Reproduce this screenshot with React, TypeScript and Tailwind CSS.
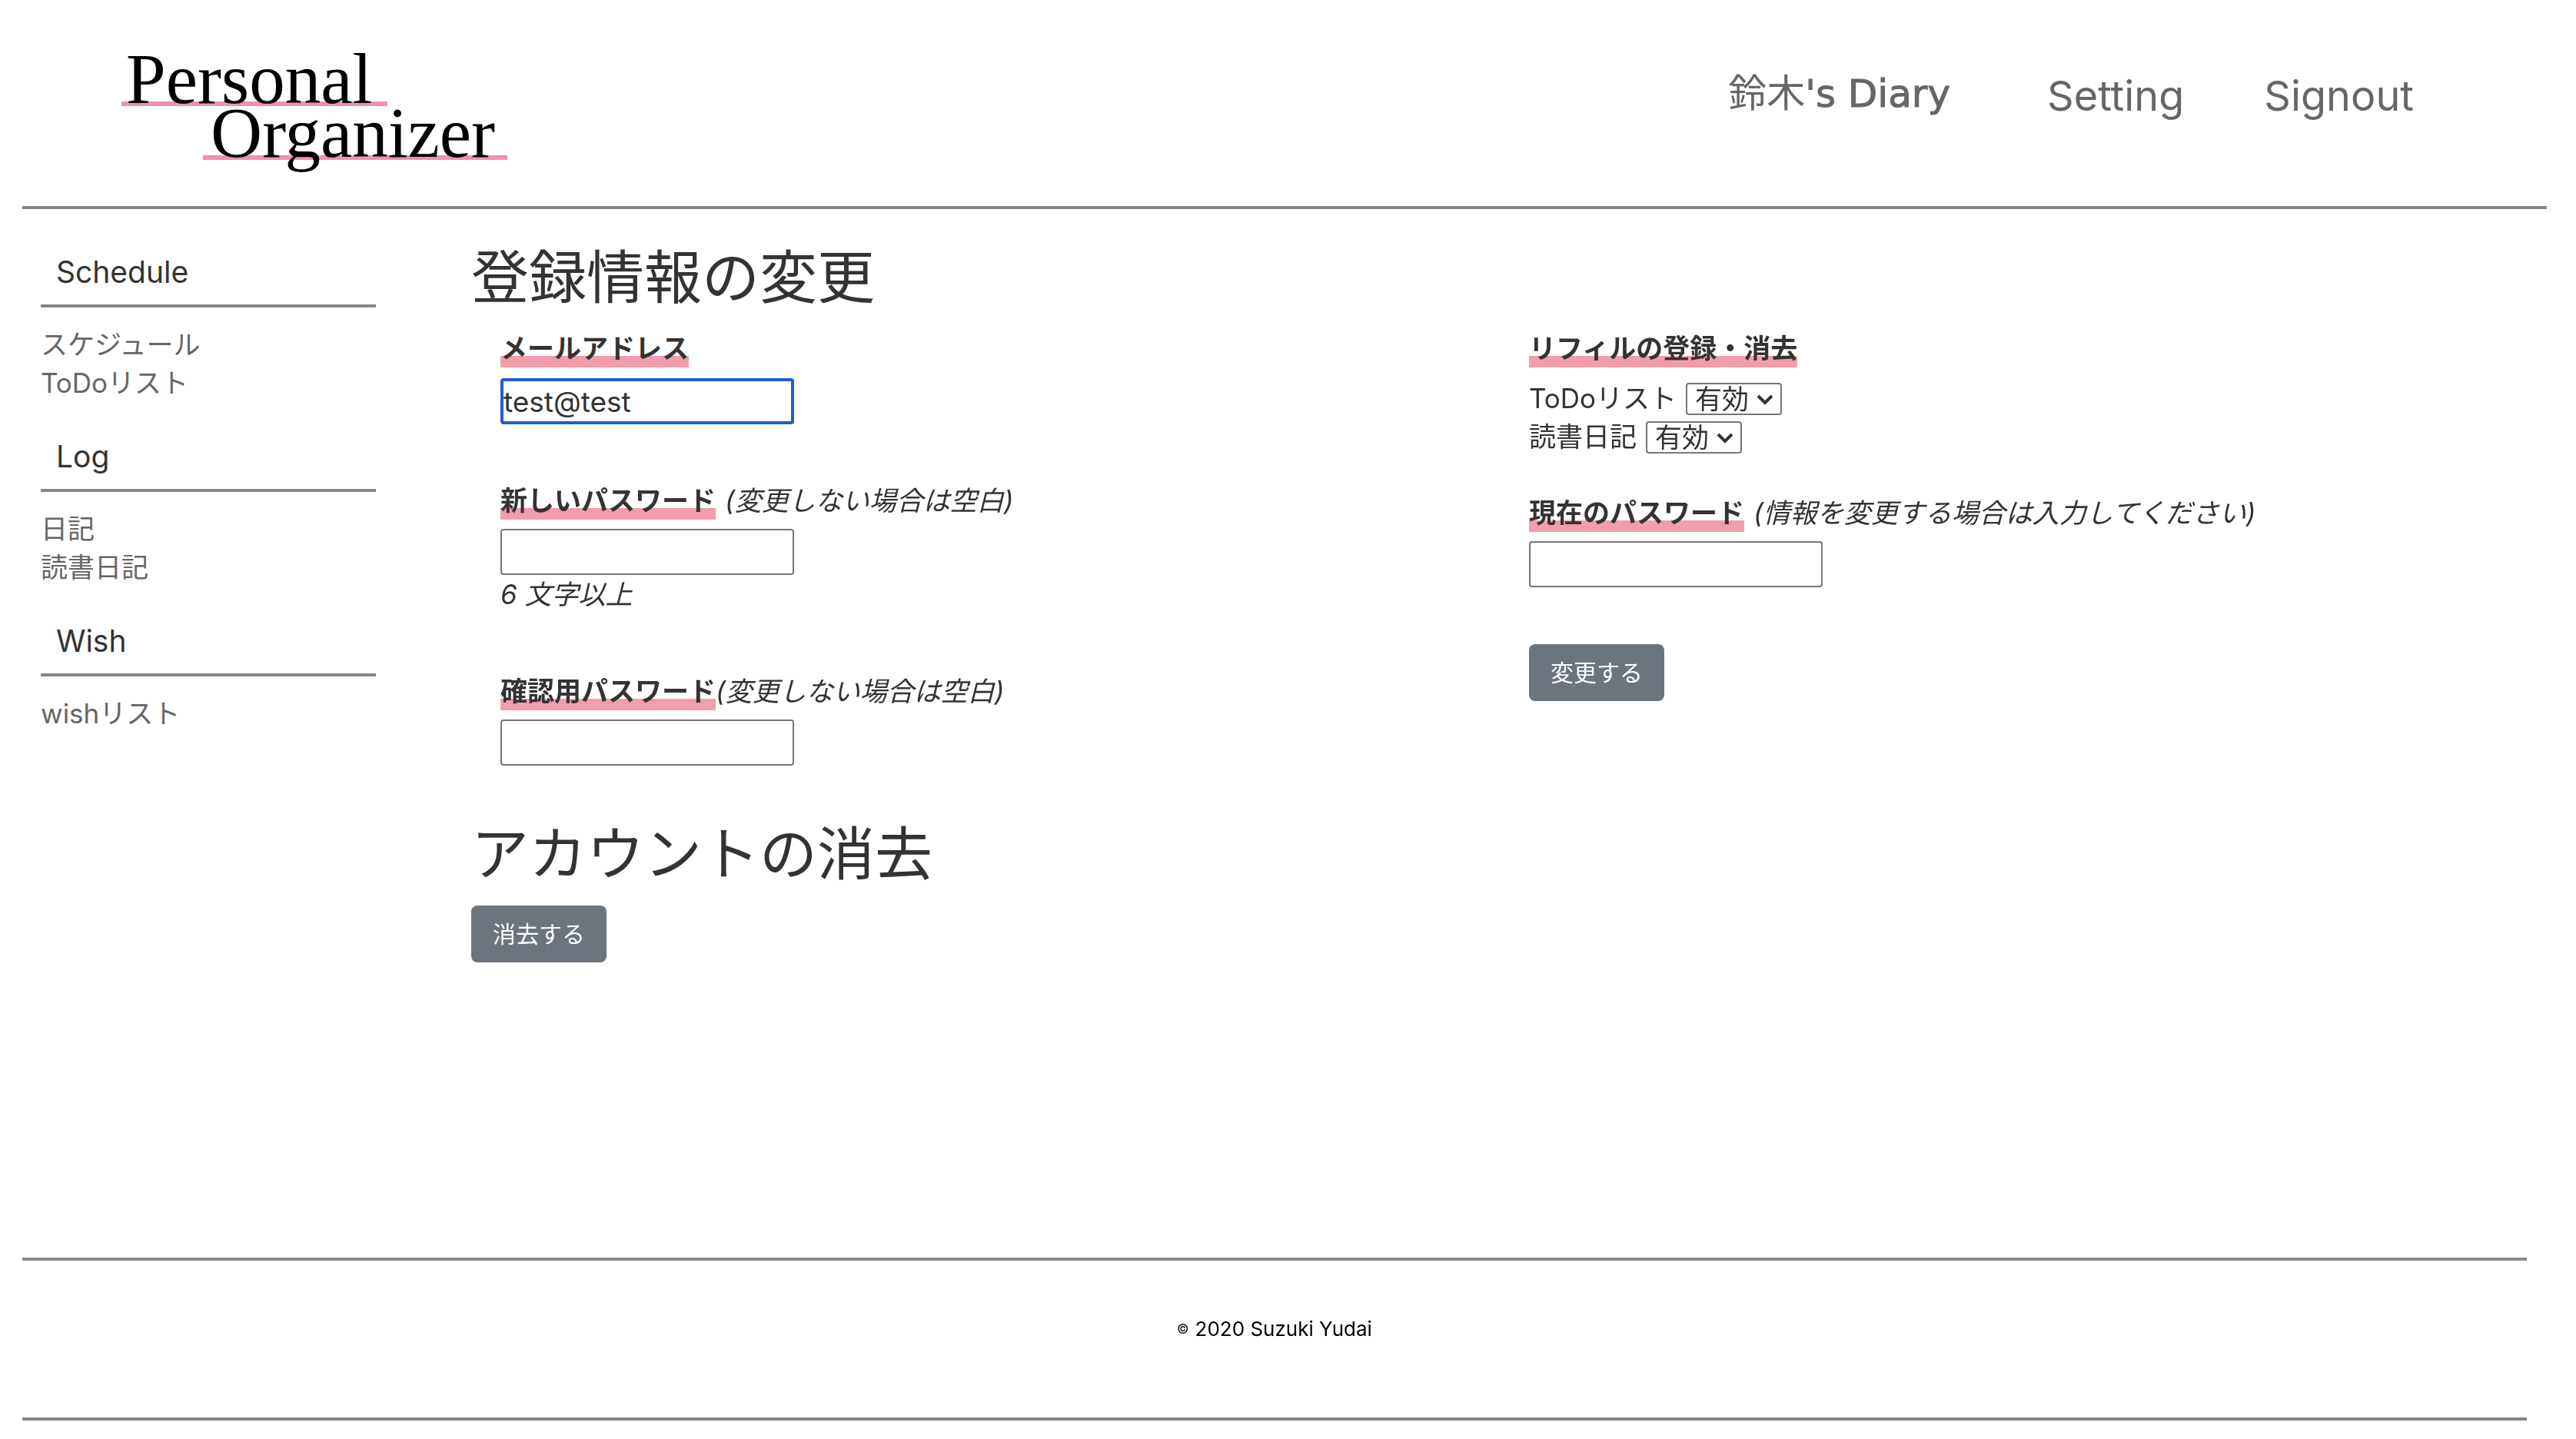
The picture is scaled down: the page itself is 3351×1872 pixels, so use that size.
import React, { useState } from "react";

type LinkItem = { label: string; href: string };

const sections: { title: string; links: LinkItem[] }[] = [
  {
    title: "Schedule",
    links: [
      { label: "スケジュール", href: "#schedule" },
      { label: "ToDoリスト", href: "#todo" },
    ],
  },
  {
    title: "Log",
    links: [
      { label: "日記", href: "#diary" },
      { label: "読書日記", href: "#reading" },
    ],
  },
  { title: "Wish", links: [{ label: "wishリスト", href: "#wish" }] },
];

const fieldClass =
  "block h-[60px] w-[382px] rounded-[4px] border-2 border-[#767676] bg-white px-1 text-[37px] leading-[50px] outline-none focus:border-4 focus:border-[#1f5fc6] focus:px-0";

function Logo() {
  return (
    <a
      href="#top"
      aria-label="Personal Organizer"
      className="flex flex-col items-start font-['Liberation_Serif',serif] text-[93px] leading-[70px] text-black"
    >
      <span className="h-[70px] bg-[linear-gradient(#f18fb7,#f18fb7)] bg-[length:100%_6px] bg-[position:0_64px] bg-no-repeat pr-5 pl-1.5">
        Personal
      </span>
      <span className="ml-[106px] h-[70px] bg-[linear-gradient(#f18fb7,#f18fb7)] bg-[length:100%_6px] bg-[position:0_64px] bg-no-repeat pr-4 pl-2.5">
        Organizer
      </span>
    </a>
  );
}

function Marked({ children }: { children: React.ReactNode }) {
  return (
    <span className="inline-block h-[50px] bg-[linear-gradient(transparent_70%,#f19dab_70%)] align-top font-bold">
      {children}
    </span>
  );
}

function RefillSelect({ id, label }: { id: string; label: string }) {
  return (
    <div className="flex h-[50px] items-start gap-3">
      <label htmlFor={id} className="leading-[40px]">
        {label}
      </label>
      <div className="relative">
        <select
          id={id}
          defaultValue="on"
          className="block h-[42px] w-[125px] appearance-none rounded-[4px] border-2 border-[#767676] bg-white pl-2.5 leading-[38px]"
        >
          <option value="on">有効</option>
          <option value="off">無効</option>
        </select>
        <svg
          viewBox="0 0 22 14"
          className="pointer-events-none absolute top-[15px] right-[11px] h-[14px] w-[22px]"
          fill="none"
          stroke="#333"
          strokeWidth="4"
        >
          <path d="M2 2 L11 11 L20 2" />
        </svg>
      </div>
    </div>
  );
}

function SubmitButton({ children }: { children: React.ReactNode }) {
  return (
    <button
      type="button"
      className="block h-[74px] cursor-pointer rounded-lg bg-[#6c757d] px-7 text-[30px] leading-[44px] text-white"
    >
      {children}
    </button>
  );
}

export default function App() {
  const [email, setEmail] = useState("test@test");

  return (
    <div className="bg-white pb-6 font-['Inter','Noto_Sans_CJK_JP',sans-serif] text-[35px] leading-[50px] text-[#333]">
      <header className="mr-[38px] ml-[29px] flex h-[272px] items-start justify-between border-b-4 border-[#888] pr-[173px] pl-[129px]">
        <div className="pt-[68px]">
          <Logo />
        </div>
        <nav className="flex items-start pt-[90px] text-[54px] leading-[70px] text-[#666]">
          <a
            href="#diary"
            className="mr-[126px] font-['DejaVu_Sans','Noto_Sans_CJK_JP',sans-serif] text-[50px] leading-[64px]"
          >
            鈴木<span className="[-webkit-text-stroke:1px_#666]">'s Diary</span>
          </a>
          <a href="#setting" className="mr-[104px]">
            Setting
          </a>
          <a href="#signout">Signout</a>
        </nav>
      </header>

      <div className="flex items-start pr-[62px] pl-[53px]">
        <aside className="w-[436px] shrink-0 pt-[57px]">
          {sections.map((s) => (
            <section key={s.title} className="mb-[46px]">
              <h2 className="mb-[23px] border-b-4 border-[#888] pb-[17px] pl-5 text-[39px]">
                {s.title}
              </h2>
              <ul>
                {s.links.map((l) => (
                  <li key={l.label}>
                    <a href={l.href} className="text-[#666]">
                      {l.label}
                    </a>
                  </li>
                ))}
              </ul>
            </section>
          ))}
        </aside>

        <main className="ml-[124px] min-w-0 flex-1 pt-[44px]">
          <h1 className="text-[75px] leading-[90px]">登録情報の変更</h1>
          <form className="mt-[22px] grid grid-cols-2">
            <div className="pl-[38px]">
              <label htmlFor="email" className="block h-[50px]">
                <Marked>メールアドレス</Marked>
              </label>
              <input
                id="email"
                type="email"
                autoFocus
                value={email}
                onChange={(e) => setEmail(e.target.value)}
                className={fieldClass + " mt-3.5"}
              />

              <label htmlFor="new-password" className="mt-[74px] block h-[50px]">
                <Marked>新しいパスワード</Marked>
                <i className="ml-3">(変更しない場合は空白)</i>
              </label>
              <input id="new-password" type="password" className={fieldClass + " mt-3"} />
              <p>
                <i>6 文字以上</i>
              </p>

              <label htmlFor="confirm-password" className="mt-[76px] block h-[50px]">
                <Marked>確認用パスワード</Marked>
                <i>(変更しない場合は空白)</i>
              </label>
              <input id="confirm-password" type="password" className={fieldClass + " mt-3"} />
            </div>

            <div className="pl-[38px]">
              <h3 className="mb-5 h-[50px]">
                <Marked>リフィルの登録・消去</Marked>
              </h3>
              <RefillSelect id="refill-todo" label="ToDoリスト" />
              <RefillSelect id="refill-reading" label="読書日記" />

              <label htmlFor="current-password" className="mt-[44px] block h-[50px]">
                <Marked>現在のパスワード</Marked>
                <i className="ml-3">(情報を変更する場合は入力してください)</i>
              </label>
              <input
                id="current-password"
                type="password"
                className={fieldClass + " mt-3 mb-[74px]"}
              />
              <SubmitButton>変更する</SubmitButton>
            </div>
          </form>

          <h1 className="mt-[70px] mb-[22px] text-[75px] leading-[90px]">アカウントの消去</h1>
          <SubmitButton>消去する</SubmitButton>
        </main>
      </div>

      <footer className="mt-96 mr-[64px] ml-[29px] flex items-center justify-center gap-2 border-y-4 border-[#888] pt-[64px] pb-[90px] text-[26px] text-black">
        <small className="text-[17px]">©</small>
        <span>2020 Suzuki Yudai</span>
      </footer>
    </div>
  );
}
